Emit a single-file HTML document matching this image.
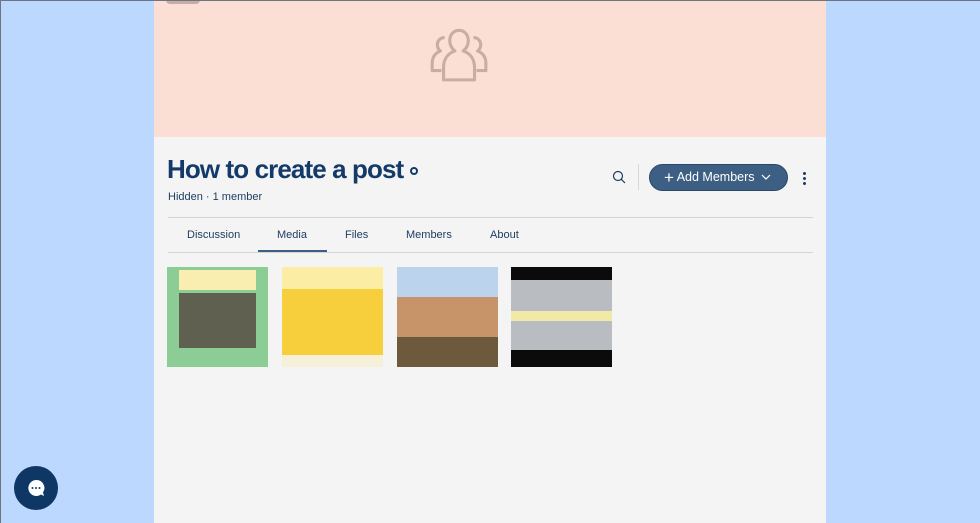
<!DOCTYPE html>
<html><head><style>
*{margin:0;padding:0;box-sizing:border-box}
body{width:980px;height:523px;overflow:hidden;background:#bdd8fe;font-family:"Liberation Sans",sans-serif;position:relative}
.bd{position:absolute;left:0;top:0;width:980px;height:523px;border-top:1px solid #6d7580;border-left:1px solid #6d7580;z-index:5;pointer-events:none}
.main{position:absolute;left:154px;top:0;width:672px;height:523px;background:#f4f4f4}
.cover{position:absolute;left:0;top:0;width:672px;height:137px;background:#fbdfd4}
.tab0{position:absolute;left:12px;top:-4px;width:34px;height:8px;border-radius:4px;background:#c9ada5}
h1{position:absolute;left:13px;top:154px;font-size:26px;color:#133a68;font-weight:bold;letter-spacing:-0.9px;white-space:nowrap}
.sub{position:absolute;left:14px;top:191px;font-size:11px;color:#1f3d63}
.btn{position:absolute;left:495px;top:164px;width:139px;height:27px;border-radius:14px;background:#3e5f84;border:1px solid #2b4768;color:#fff;font-size:12.5px;line-height:25px;padding-left:14px}
.sep{position:absolute;left:484px;top:164px;width:1px;height:26px;background:#d8d8d8}
.line{position:absolute;left:14px;width:645px;height:1px;background:#d4d4d4}
.tabs span{position:absolute;top:229px;font-size:11px;color:#1f3d63}
.ul{position:absolute;left:104px;top:250px;width:69px;height:2px;background:#3e5f84}
.th{position:absolute;top:267px;width:101px;height:100px}
.chat{position:absolute;left:14px;top:466px;width:44px;height:44px;border-radius:50%;background:#0f3766}
</style></head><body>
<div class="bd"></div>
<div class="main">
<div class="cover"><div class="tab0"></div>
<svg style="position:absolute;left:272px;top:21px" width="64" height="62" viewBox="0 0 62 60" fill="none" stroke="#c9ada5" stroke-width="3" stroke-linejoin="round">
<path d="M33 57H17V45c0-9 5-14 11-16-3-2-5-6-5-10 0-6 4-10 9-10s9 4 9 10c0 4-2 8-5 10 6 2 11 7 11 16v12H33z"/>
<path d="M15 48H6v-7c0-6 3-10 8-12-2-1-3-4-3-6 0-4 3-7 7-7"/>
<path d="M49 48h9v-7c0-6-3-10-8-12 2-1 3-4 3-6 0-4-3-7-7-7"/>
</svg></div>
<h1>How to create a post</h1>
<div style="position:absolute;left:256px;top:167px;width:8px;height:8px;border-radius:50%;border:2.5px solid #133a68"></div>
<div class="sub">Hidden · 1 member</div>
<svg style="position:absolute;left:458px;top:170px" width="14" height="14" viewBox="0 0 14 14" fill="none" stroke="#1f3d63" stroke-width="1.2"><circle cx="6" cy="6" r="4.5"/><path d="M9.3 9.3L13 13"/></svg>
<div class="sep"></div>
<div class="btn"><span style="font-size:17px;vertical-align:-2px">+</span> Add Members <svg width="10" height="7" viewBox="0 0 10 7" style="margin-left:3px"><path d="M1 1l4 4 4-4" fill="none" stroke="#fff" stroke-width="1.2"/></svg></div>
<div style="position:absolute;left:649px;top:172px;width:3px;height:3px;border-radius:50%;background:#1f3d63;box-shadow:0 5px 0 #1f3d63,0 10px 0 #1f3d63"></div>
<div class="line" style="top:217px"></div>
<div class="tabs"><span style="left:33px">Discussion</span><span style="left:123px">Media</span><span style="left:191px">Files</span><span style="left:252px">Members</span><span style="left:336px">About</span></div>
<div class="line" style="top:252px"></div>
<div class="ul"></div>
<div class="th" style="left:13px;background:#8ccc95"><div style="margin:3px 12px;height:20px;background:#f9eeb0"></div><div style="margin:0 12px;height:55px;background:#5f6050"></div></div>
<div class="th" style="left:128px;background:#f7cf3c"><div style="height:22px;background:#fbeda4"></div><div style="position:absolute;left:0;bottom:0;width:101px;height:12px;background:#f7f0d8"></div></div>
<div class="th" style="left:243px;background:#c79469"><div style="height:30px;background:#bcd3ee"></div><div style="position:absolute;left:0;bottom:0;width:101px;height:30px;background:#6d5a3c"></div></div>
<div class="th" style="left:357px;background:#0b0b0b"><div style="margin-top:13px;height:70px;background:#b9bcc0"></div><div style="position:absolute;left:0;top:44px;width:101px;height:10px;background:#f0eaa6"></div></div>
</div>
<div class="chat"><svg style="position:absolute;left:12px;top:12px" width="20" height="20" viewBox="0 0 20 20"><path d="M10 2a8 8 0 1 0 5 14.5l3 1.5-1-3.5A8 8 0 0 0 10 2z" fill="#fff"/><circle cx="6.5" cy="10" r="1" fill="#0f3766"/><circle cx="10" cy="10" r="1" fill="#0f3766"/><circle cx="13.5" cy="10" r="1" fill="#0f3766"/></svg></div>
</body></html>
